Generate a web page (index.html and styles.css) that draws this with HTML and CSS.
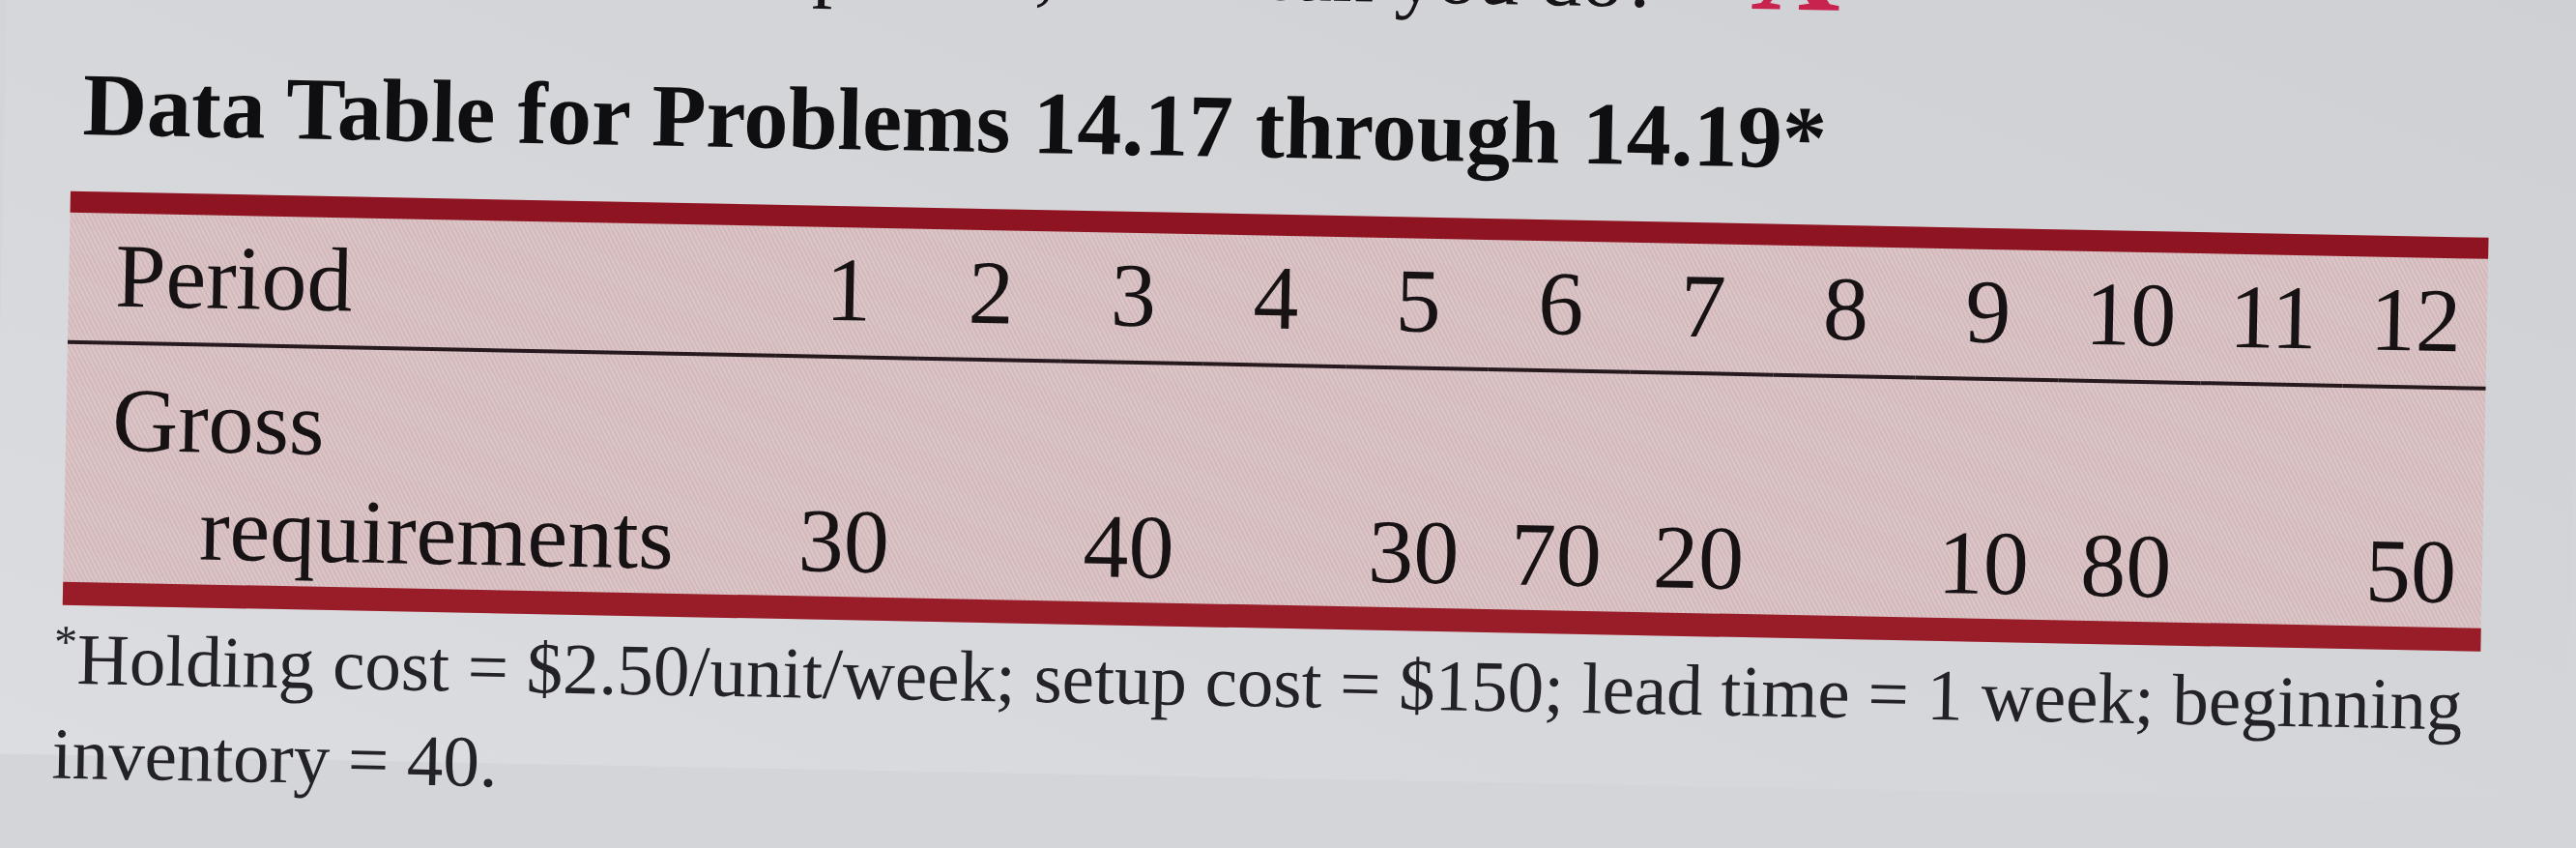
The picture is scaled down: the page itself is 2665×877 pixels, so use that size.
FILE: index.html
```html
<!DOCTYPE html>
<html lang="en">
<head>
<meta charset="utf-8">
<title>Data Table for Problems 14.17 through 14.19</title>
<link rel="stylesheet" href="styles.css">
</head>
<body>
<div class="page">
  <p class="prev-line">If the order is put off, what can you do?<span class="px">X</span></p>
  <h2 class="title">Data Table for Problems 14.17 through 14.19*</h2>
  <table class="data">
    <colgroup><col class="label-col"><col span="12"></colgroup>
    <tbody>
      <tr class="head-row">
        <th class="label">Period</th>
        <td>1</td><td>2</td><td>3</td><td>4</td><td>5</td><td>6</td><td>7</td><td>8</td><td>9</td><td>10</td><td>11</td><td>12</td>
      </tr>
      <tr class="gross-row">
        <th class="label">Gross<br>requirements</th>
        <td>30</td><td></td><td>40</td><td></td><td>30</td><td>70</td><td>20</td><td></td><td>10</td><td>80</td><td></td><td>50</td>
      </tr>
    </tbody>
  </table>
  <p class="note"><sup class="star">*</sup>Holding cost = $2.50/unit/week; setup cost = $150; lead time = 1 week; beginning<br>inventory = 40.</p>
</div>
</body>
</html>
```

FILE: styles.css
```css
html, body {
  margin: 0;
  padding: 0;
  width: 2665px;
  height: 877px;
  overflow: hidden;
  background: #d4d5d9;
}

.page {
  width: 2665px;
  height: 877px;
  background: linear-gradient(200deg, #cfd0d4 0%, #d4d5d9 45%, #dcdde0 100%);
  font-family: "Liberation Serif", "Times New Roman", serif;
  color: #141214;
  transform: rotate(1.1deg);
  transform-origin: 1332px 438px;
}

.prev-line {
  margin: -72px 0 0 0;
  height: 86px;
  font-size: 86px;
  line-height: 86px;
  text-align: right;
  padding-right: 768px;
  white-space: nowrap;
  color: #161416;
}

.px {
  font-weight: bold;
  font-size: 130px;
  line-height: 0;
  color: #c8234f;
  margin-left: 93px;
}

.title {
  margin: 72px 0 0 0;
  padding-left: 81px;
  font-size: 92px;
  line-height: 92px;
  font-weight: bold;
  white-space: nowrap;
  color: #0f0e10;
}

.data {
  margin: 44px 0 0 70px;
  width: 2502px;
  table-layout: fixed;
  border-collapse: separate;
  border-spacing: 0;
  background-color: #d8bfc1;
  background-image: repeating-linear-gradient(62deg, rgba(255, 255, 255, 0.09) 0 2px, rgba(80, 40, 50, 0.04) 2px 4px);
  border-top: 22px solid #8f1421;
  border-bottom: 24px solid #981d28;
  font-size: 94px;
  line-height: 111px;
  color: #171315;
}

.label-col {
  width: 733px;
}

.data th,
.data td {
  font-weight: normal;
  padding: 0;
}

.data td {
  text-align: center;
}

.head-row th,
.head-row td {
  padding-top: 9px;
  padding-bottom: 12px;
  border-bottom: 4px solid #261a1f;
  vertical-align: baseline;
}

.gross-row th,
.gross-row td {
  padding-top: 22px;
  padding-bottom: 2px;
  vertical-align: bottom;
}

.data .label {
  text-align: left;
  padding-left: 48px;
  white-space: nowrap;
}

.data .gross-row .label {
  padding-left: 140px;
  text-indent: -92px;
}

.note {
  margin: 7px 0 0 0;
  padding-left: 62px;
  font-size: 75px;
  line-height: 98px;
  white-space: nowrap;
  color: #232226;
}

.star {
  font-size: 48px;
  line-height: 0;
  vertical-align: 27px;
}
```
